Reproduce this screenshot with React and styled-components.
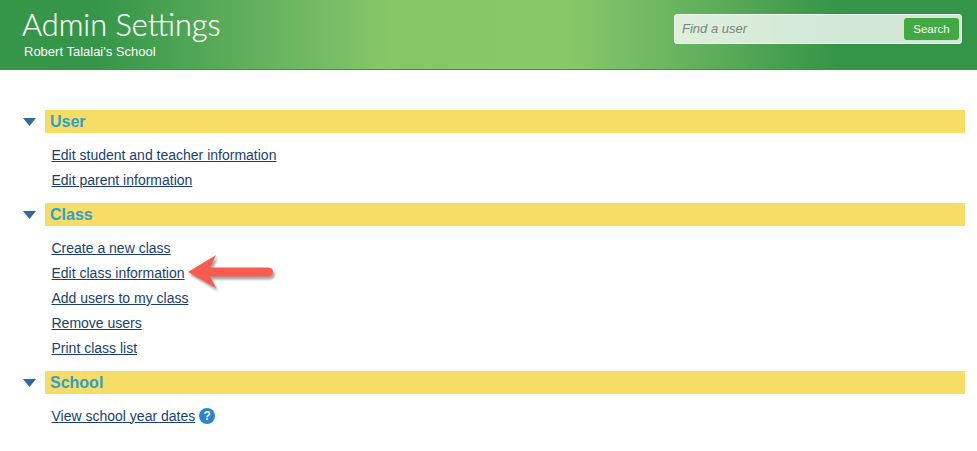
import React from "react";
import styled, { createGlobalStyle } from "styled-components";

const Global = createGlobalStyle`
  html, body { margin: 0; padding: 0; background: #fff; }
  body { font-family: "Liberation Sans", Arial, sans-serif; }
`;
const Header = styled.header`
  height: 69px;
  border-bottom: 1px solid #3f9443;
  display: flex;
  justify-content: space-between;
  padding: 0 15px 0 22px;
  background: linear-gradient(90deg, #35964a 0%, #35964a 10%, #6db761 30%, #87c768 40%, #88c869 58%, #6db761 68%, #349447 86%, #349447 100%);
`;
const TitleBlock = styled.div`
  display: flex;
  flex-direction: column;
`;
const Title = styled.h1`
  margin: 7px 0 0;
  font: 300 30.7px/36px Lato, sans-serif;
  color: #fff;
  -webkit-text-stroke: 0.2px #fff;
`;
const School = styled.div`
  margin: 1px 0 0 2px;
  font-size: 13px;
  line-height: 15px;
  color: #fff;
`;
const SearchBox = styled.form`
  box-sizing: border-box;
  width: 288px;
  height: 30px;
  margin-top: 14px;
  padding: 3px 2px 3px 3px;
  display: flex;
  justify-content: space-between;
  align-items: center;
  background: rgba(255, 255, 255, 0.78);
  border: 1px solid #f2f8f0;
  border-radius: 3px;
`;
const Placeholder = styled.span`
  margin: 0 0 2px 4px;
  font-size: 13px;
  font-style: italic;
  color: #7b827c;
`;
const SearchButton = styled.span`
  width: 55px;
  height: 22px;
  background: #42aa42;
  border-radius: 3px;
  color: #fff;
  font-size: 11.5px;
  line-height: 22px;
  text-align: center;
`;
const Main = styled.main`
  padding: 40px 12px 0 23px;
`;
const SectionRow = styled.div`
  display: flex;
  align-items: center;
  height: 23px;
`;
const Triangle = styled.svg`
  width: 13px;
  height: 8px;
  margin-right: 9px;
  flex: none;
`;
const Bar = styled.h2`
  flex: 1;
  margin: 0;
  height: 23px;
  padding-left: 5px;
  background: #f7dc66;
  color: #31a0c9;
  font-size: 16px;
  font-weight: bold;
  line-height: 23px;
`;
const Links = styled.ul`
  list-style: none;
  margin: 0;
  padding: 9px 0 11px 28.5px;
`;
const Item = styled.li`
  position: relative;
  height: 25px;
  display: flex;
  align-items: center;
  font-size: 14px;
`;
const Link = styled.a`
  color: #1a3f70;
  text-decoration: underline;
`;
const Help = styled.span`
  width: 16px;
  height: 16px;
  margin-left: 4px;
  border-radius: 50%;
  background: #2a85cc;
  color: #fff;
  font-size: 12px;
  font-weight: bold;
  line-height: 16px;
  text-align: center;
`;
const Arrow = styled.svg`
  position: absolute;
  left: 132.5px;
  top: -7.5px;
  overflow: visible;
`;

const Section = ({ title, links }) => (
  <section>
    <SectionRow>
      <Triangle viewBox="0 0 13 8">
        <path d="M0 0H13L6.5 8Z" fill="#35679f" />
      </Triangle>
      <Bar>{title}</Bar>
    </SectionRow>
    <Links>
      {links.map((l) => (
        <Item key={l}>
          <Link href="#">{l}</Link>
          {l === "Edit class information" && (
            <Arrow width="92" height="40" viewBox="0 0 92 40">
              <path
                d="M5 20L33 3L27 15.5H85Q90 16 90 19.5Q90 23.5 85 24.5H27L33 36Z"
                fill="#000"
                opacity="0.35"
                transform="translate(1 2)"
                style={{ filter: "blur(1.2px)" }}
              />
              <path d="M4 19L32 2L26 14.5H84Q89 15 89 18.5Q89 22.5 84 23.5H26L32 35Z" fill="#f95b50" />
            </Arrow>
          )}
          {l === "View school year dates" && <Help>?</Help>}
        </Item>
      ))}
    </Links>
  </section>
);

export default function App() {
  return (
    <>
      <Global />
      <Header>
        <TitleBlock>
          <Title>Admin Settings</Title>
          <School>Robert Talalai's School</School>
        </TitleBlock>
        <SearchBox>
          <Placeholder>Find a user</Placeholder>
          <SearchButton>Search</SearchButton>
        </SearchBox>
      </Header>
      <Main>
        <Section title="User" links={["Edit student and teacher information", "Edit parent information"]} />
        <Section
          title="Class"
          links={["Create a new class", "Edit class information", "Add users to my class", "Remove users", "Print class list"]}
        />
        <Section title="School" links={["View school year dates"]} />
      </Main>
    </>
  );
}
